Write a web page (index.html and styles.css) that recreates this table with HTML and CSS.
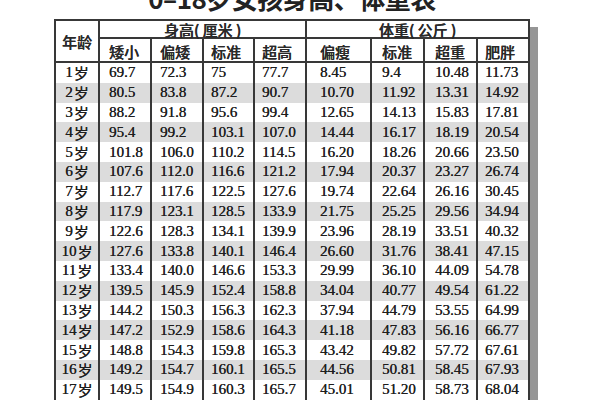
FILE: index.html
```html
<!DOCTYPE html>
<html lang="zh-CN">
<head>
<meta charset="utf-8">
<link rel="stylesheet" href="styles.css">
</head>
<body>
<div class="page">
  <div class="title"><span>0–18岁女孩身高、体重表</span></div>
  <div class="grid">
    <div class="h age">年龄</div>
    <div class="h group g1">身高( 厘米 )</div>
    <div class="h group g2">体重( 公斤 )</div>
    <div class="sub">
      <div class="h">矮小</div><div class="h">偏矮</div><div class="h">标准</div><div class="h">超高</div>
      <div class="h">偏瘦</div><div class="h">标准</div><div class="h">超重</div><div class="h">肥胖</div>
    </div>
    <div class="row"><div>1<i>岁</i></div><div>69.7</div><div>72.3</div><div>75</div><div>77.7</div><div>8.45</div><div>9.4</div><div>10.48</div><div>11.73</div></div>
    <div class="row alt"><div>2<i>岁</i></div><div>80.5</div><div>83.8</div><div>87.2</div><div>90.7</div><div>10.70</div><div>11.92</div><div>13.31</div><div>14.92</div></div>
    <div class="row"><div>3<i>岁</i></div><div>88.2</div><div>91.8</div><div>95.6</div><div>99.4</div><div>12.65</div><div>14.13</div><div>15.83</div><div>17.81</div></div>
    <div class="row alt"><div>4<i>岁</i></div><div>95.4</div><div>99.2</div><div>103.1</div><div>107.0</div><div>14.44</div><div>16.17</div><div>18.19</div><div>20.54</div></div>
    <div class="row"><div>5<i>岁</i></div><div>101.8</div><div>106.0</div><div>110.2</div><div>114.5</div><div>16.20</div><div>18.26</div><div>20.66</div><div>23.50</div></div>
    <div class="row alt"><div>6<i>岁</i></div><div>107.6</div><div>112.0</div><div>116.6</div><div>121.2</div><div>17.94</div><div>20.37</div><div>23.27</div><div>26.74</div></div>
    <div class="row"><div>7<i>岁</i></div><div>112.7</div><div>117.6</div><div>122.5</div><div>127.6</div><div>19.74</div><div>22.64</div><div>26.16</div><div>30.45</div></div>
    <div class="row alt"><div>8<i>岁</i></div><div>117.9</div><div>123.1</div><div>128.5</div><div>133.9</div><div>21.75</div><div>25.25</div><div>29.56</div><div>34.94</div></div>
    <div class="row"><div>9<i>岁</i></div><div>122.6</div><div>128.3</div><div>134.1</div><div>139.9</div><div>23.96</div><div>28.19</div><div>33.51</div><div>40.32</div></div>
    <div class="row alt"><div>10<i>岁</i></div><div>127.6</div><div>133.8</div><div>140.1</div><div>146.4</div><div>26.60</div><div>31.76</div><div>38.41</div><div>47.15</div></div>
    <div class="row"><div>11<i>岁</i></div><div>133.4</div><div>140.0</div><div>146.6</div><div>153.3</div><div>29.99</div><div>36.10</div><div>44.09</div><div>54.78</div></div>
    <div class="row alt"><div>12<i>岁</i></div><div>139.5</div><div>145.9</div><div>152.4</div><div>158.8</div><div>34.04</div><div>40.77</div><div>49.54</div><div>61.22</div></div>
    <div class="row"><div>13<i>岁</i></div><div>144.2</div><div>150.3</div><div>156.3</div><div>162.3</div><div>37.94</div><div>44.79</div><div>53.55</div><div>64.99</div></div>
    <div class="row alt"><div>14<i>岁</i></div><div>147.2</div><div>152.9</div><div>158.6</div><div>164.3</div><div>41.18</div><div>47.83</div><div>56.16</div><div>66.77</div></div>
    <div class="row"><div>15<i>岁</i></div><div>148.8</div><div>154.3</div><div>159.8</div><div>165.3</div><div>43.42</div><div>49.82</div><div>57.72</div><div>67.61</div></div>
    <div class="row alt"><div>16<i>岁</i></div><div>149.2</div><div>154.7</div><div>160.1</div><div>165.5</div><div>44.56</div><div>50.81</div><div>58.45</div><div>67.93</div></div>
    <div class="row"><div>17<i>岁</i></div><div>149.5</div><div>154.9</div><div>160.3</div><div>165.7</div><div>45.01</div><div>51.20</div><div>58.73</div><div>68.04</div></div>
  </div>
</div>
</body>
</html>
```

FILE: styles.css
```css
html, body {
  margin: 0;
  padding: 0;
  background: #fff;
  overflow: hidden;
}
.page {
  width: 476px;
  padding-left: 54px;
}
.title {
  height: 19px;
  padding-bottom: 8px;
  box-sizing: border-box;
  display: flex;
  align-items: flex-end;
  justify-content: center;
  overflow: hidden;
}
.title span {
  font-family: "Noto Sans CJK SC", sans-serif;
  font-weight: 700;
  font-size: 26px;
  line-height: 26px;
  color: #222;
  white-space: nowrap;
  letter-spacing: -0.5px;
}
.grid {
  display: grid;
  grid-template-columns: 42px 50px 50px 49px 50px 63px 51px 51px 50px;
  grid-template-rows: 18px 24px repeat(17, 19.8px);
  column-gap: 2px;
  border: 2px solid #383838;
  background: #383838;
  box-shadow: 8px 8px 0 #969696;
  font-family: "Liberation Serif", "Noto Sans CJK SC", serif;
  font-size: 15px;
  color: #1e1e1e;
  text-shadow: 0.35px 0 0 #1e1e1e;
}
.grid > div:not(.sub):not(.row),
.sub > div,
.row > div {
  background: #fff;
  display: flex;
  align-items: center;
  box-sizing: border-box;
  white-space: nowrap;
}
.h {
  font-family: "Noto Sans CJK SC", sans-serif;
  font-weight: 500;
  font-size: 15px;
  color: #2a2a2a;
  border-bottom: 2px solid #383838;
}
.age {
  grid-row: 1 / span 2;
  grid-column: 1;
  justify-content: center;
}
.group {
  justify-content: center;
}
.g1 { grid-column: 2 / span 4; }
.g2 { grid-column: 6 / span 4; }
.sub, .row { display: contents; }
.sub > div { padding-top: 2px; }
.row > div:first-child {
  justify-content: center;
}
.row i {
  font-style: normal;
  font-family: "Noto Sans CJK SC", sans-serif;
  font-size: 15px;
  margin-left: 1px;
}
.row.alt > div { background: #dcdcdc; }

.row > div:nth-child(2), .sub > div:nth-child(1) { padding-left: 9px; }
.row > div:nth-child(3), .sub > div:nth-child(2) { padding-left: 8px; }
.row > div:nth-child(4), .sub > div:nth-child(3) { padding-left: 7px; }
.row > div:nth-child(5), .sub > div:nth-child(4) { padding-left: 7px; }
.row > div:nth-child(6), .sub > div:nth-child(5) { padding-left: 13px; }
.row > div:nth-child(7), .sub > div:nth-child(6) { padding-left: 10px; }
.row > div:nth-child(8), .sub > div:nth-child(7) { padding-left: 10px; }
.row > div:nth-child(9), .sub > div:nth-child(8) { padding-left: 7px; }
```
